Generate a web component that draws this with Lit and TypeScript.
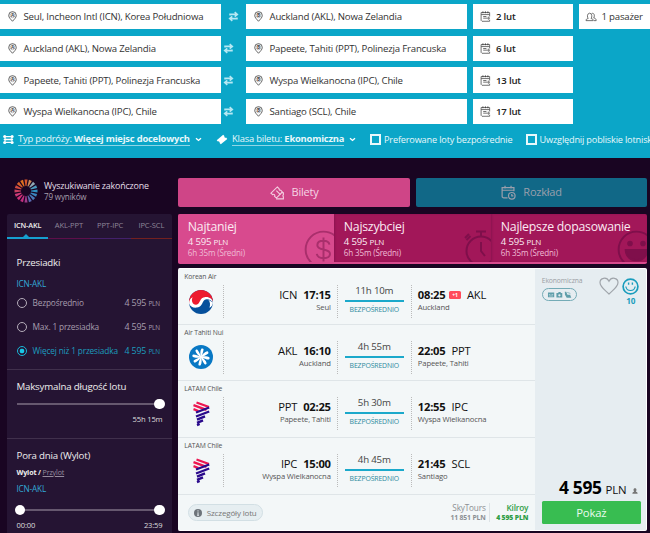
import { LitElement, css, html, svg } from "lit";
import { customElement, property } from "lit/decorators.js";

const pinIcon = (letter: string) => html`
  <svg class="pin" viewBox="0 0 10 12" width="9" height="11">
    <path d="M5 11.3C3.4 9.3.8 7.4.8 4.8a4.2 4.2 0 0 1 8.4 0C9.2 7.4 6.6 9.3 5 11.3z" fill="none" stroke="#444" stroke-width=".9" />
    <circle cx="5" cy="4.8" r="2.6" fill="none" stroke="#888" stroke-width=".6" />
    <text x="5" y="6.7" text-anchor="middle" font-size="5.2" font-weight="700" fill="#444">${letter}</text>
  </svg>
`;

const swapIcon = html`
  <svg viewBox="0 0 12 12" width="11" height="11" fill="none" stroke="#b5e8f3" stroke-width="1.7">
    <path d="M2.2 5V3.7h7.3M7.3 1.2l2.9 2.5-2.9 2.5M9.8 7v1.3H2.5M4.7 5.8L1.8 8.3l2.9 2.5" />
  </svg>
`;

const calendarIcon = html`
  <svg viewBox="0 0 12 12" width="11" height="11" fill="none" stroke="#555" stroke-width=".9">
    <path d="M10.5 6V1.7H1.2v8.5l1 1h8.3V9.5" />
    <path d="M1.2 3.9h9.3" />
    <path d="M3.2.4v2M5.9.4v2M8.6.4v2" stroke="#333" />
    <path d="M3.5 6h3.5M3.5 7.8h6.8M8.6 6.1l1.8 1.7-1.8 1.7" />
  </svg>
`;

const peopleIcon = html`
  <svg viewBox="0 0 13 11" width="12" height="10" fill="none" stroke="#555" stroke-width=".9">
    <path d="M1 9.5c0-1.5.8-2 2.4-2.3C2 5.5 2.3 1.3 5 1.3s3 4.2 1.6 5.9C8.2 7.5 9 8 9 9.5z" />
    <path d="M7.2 1.7C9.8.5 11 3.8 9.5 6.6c1.7.3 2.7.9 2.7 2.9H9.8" />
  </svg>
`;

const chevron = html`
  <svg viewBox="0 0 8 6" width="7" height="5" fill="none" stroke="#fff" stroke-width="1.7">
    <path d="M1 1.5l3 2.6 3-2.6" />
  </svg>
`;

const routeIcon = html`
  <svg viewBox="0 0 12 10" width="11" height="9" fill="none" stroke="#fff" stroke-width="1.4">
    <path d="M2 1.7h8M2 5h8M2 8.3h8" />
    <g fill="#fff" stroke="none">
      <circle cx="1.8" cy="1.7" r="1.7" /><circle cx="2.2" cy="5" r="1.5" /><circle cx="1.8" cy="8.3" r="1.7" />
      <circle cx="10" cy="1.7" r="1.7" /><circle cx="9.6" cy="5" r="1.5" /><circle cx="10" cy="8.3" r="1.7" />
    </g>
  </svg>
`;

const ticketIcon = html`
  <svg viewBox="0 0 12 11" width="12" height="11" fill="#fff">
    <path d="M7.2.8l1.2 1.3a1.2 1.2 0 0 0 1.7 1.5l1.2 1.3-6.5 5.4-1.2-1.3A1.2 1.2 0 0 0 1.9 7.5L.7 6.2z" />
  </svg>
`;

const ticketsIcon = html`
  <svg viewBox="0 0 16 15" width="15" height="14" fill="none" stroke="#f4cfe1" stroke-width="1.2">
    <path d="M7.8 1l2 2a1.2 1.2 0 0 0 1.6 1.5l1.8 1.9-6.4 6.5-2-2A1.2 1.2 0 0 0 3 9.3L1 7.7z" />
    <path d="M6.5 13.8h7.8v-2.3a1.2 1.2 0 0 1 0-2V7.2l-1.8-.1M6.8 5l4.3 4.3" />
  </svg>
`;

const scheduleIcon = html`
  <svg viewBox="0 0 16 16" width="15" height="15" fill="none" stroke="#9a9fac" stroke-width="1.3">
    <path d="M7 13.7H3a1.8 1.8 0 0 1-1.8-1.8V2.7h12.6v4M1.2 5.6h12.6M4.3.8v3M10.7.8v3" />
    <circle cx="11.5" cy="11.5" r="3.5" />
    <path d="M11.5 9.6v2h1.7" />
  </svg>
`;

const dollarArt = html`
  <svg viewBox="0 0 36 36" width="39" height="39" fill="none" stroke="#a92f6c" stroke-width="1.8">
    <circle cx="18" cy="18" r="16.5" />
    <path d="M23.5 13.5c-.5-2.5-2.5-3.5-5.5-3.5-3.5 0-5.7 1.5-5.7 4 0 5.5 11.7 2.5 11.7 8 0 2.5-2.3 4-6 4-3.5 0-5.7-1.3-6.2-4M18 7v22" />
  </svg>
`;

const watchArt = html`
  <svg viewBox="0 0 34 40" width="34" height="40" fill="none" stroke="#7f0f4b" stroke-width="2">
    <circle cx="18" cy="21" r="14.5" />
    <path d="M13 1.5h10M18 2v5M18 12v9l4 5M3.5 10l4-4M2 8l4-4" />
  </svg>
`;

const smileArt = html`
  <svg viewBox="0 0 36 36" width="39" height="39" fill="none" stroke="#7f0f4b" stroke-width="1.8">
    <circle cx="18" cy="18" r="16.5" />
    <circle cx="12" cy="12.5" r="1.7" fill="#7f0f4b" /><circle cx="24" cy="12.5" r="1.7" fill="#7f0f4b" />
    <path d="M8 18.5h20c0 5.5-4.5 9.5-10 9.5s-10-4-10-9.5z" fill="#7f0f4b" />
  </svg>
`;

const logos: Record<string, unknown> = {
  korean: html`
    <svg viewBox="0 0 24 24" width="24" height="24">
      <circle cx="12" cy="12" r="12" fill="#06509c" />
      <path d="M0 12A12 12 0 0 1 24 12C22.5 6 13 5.5 12 12S2 18.5 0 12z" fill="#ed1b2f" />
      <path d="M.1 13.5C0 11 1.2 8 3.6 7.3 1.9 10.5 3.5 15 7.2 14.7 11.5 14.3 10 7.5 16.5 7 20.5 6.7 23.5 9 24 12.5 22.5 10.5 20 8.8 17.3 9.3 12.5 10.2 14.5 16.7 8 17.6 4 18.1.9 16.5.1 13.5z" fill="#fff" />
      <path d="M24 12.5c-.2 2.7-1.5 4.5-3.6 5.3 1-2.7.9-5.7-1.1-8z" fill="#fff" />
    </svg>
  `,
  tahiti: html`
    <svg viewBox="0 0 24 24" width="24" height="24">
      <circle cx="12" cy="12" r="12" fill="#0878c4" />
      ${[0, 45, 90, 135, 180, 225, 270, 315].map(
        (angle) => svg`<path d="M11.6 12C10.9 9 10.1 6 11.2 3.7c.9-.7 1.9-.5 2.3.3.2 2.4-.7 5-1.1 8z" fill="#fff" transform="rotate(${angle + 8} 12 12)" />`
      )}
    </svg>
  `,
  latam: html`
    <svg viewBox="0 0 24 28" width="24" height="28">
      <g fill="none" stroke="#ed1651" stroke-width="2.3">
        <path d="M7.5 2.5l12.5 4.5M4.5 5.2l13 4.6M4.5 9.2l5 1.8" />
      </g>
      <g fill="none" stroke="#2a0a8c" stroke-width="2.4">
        <path d="M20.2 7.5L7 12.5M20.2 11.5L7 16.5M16 16.4l-8 3.2M14 20.4l-6 2.5M10.7 24l-2.7 1.1" />
      </g>
    </svg>
  `
};

@customElement("flight-leg")
export class FlightLeg extends LitElement {
  @property({ type: Object }) leg: any = {};

  render() {
    const leg = this.leg;
    return html`
      <div class="airline">${leg.airline}</div>
      <div class="leg">
        <div class="logo">${logos[leg.logo]}</div>
        <div class="side from">
          <div class="time"><span>${leg.from}</span><b>${leg.departure}</b></div>
          <div class="city">${leg.fromCity}</div>
        </div>
        <div class="duration">
          <div class="hours">${leg.duration}</div>
          <div class="line"></div>
          <div class="direct">BEZPOŚREDNIO</div>
        </div>
        <div class="side">
          <div class="time">
            <b>${leg.arrival}</b>${leg.plus ? html`<i>${leg.plus}</i>` : ""}<span>${leg.to}</span>
          </div>
          <div class="city">${leg.toCity}</div>
        </div>
      </div>
    `;
  }

  static styles = css`
    :host {
      display: block;
      box-sizing: border-box;
      height: 56.9px;
      padding-top: 2px;
      border-bottom: 1px solid #dfe5e8;
    }
    * {
      letter-spacing: -0.02em;
    }
    .airline {
      height: 12px;
      padding-left: 6px;
      font-size: 6.8px;
      line-height: 12px;
      color: #555;
    }
    .leg {
      display: grid;
      grid-template-columns: 45.5px 114px 74px 120px;
      height: 32px;
      margin-top: 2px;
    }
    .logo {
      display: flex;
      align-items: center;
      justify-content: center;
      border-right: 1px dotted #bbb;
    }
    .side {
      padding: 3px 6px 0;
    }
    .from {
      text-align: right;
      border-right: 1px dotted #bbb;
    }
    .from .time {
      justify-content: flex-end;
    }
    .time {
      display: flex;
      align-items: center;
      gap: 6px;
      height: 13px;
      font-size: 11.2px;
      line-height: 13px;
      color: #111;
    }
    .time i {
      width: 12px;
      height: 8px;
      margin-left: -2.5px;
      border-radius: 1.5px;
      background: #ff4b5c;
      color: #fff;
      font: 700 5px/8px "Open Sans", sans-serif;
      text-align: center;
    }
    .city {
      font-size: 7.7px;
      line-height: 12px;
      color: #555;
    }
    .duration {
      padding: 0 7px;
      border-right: 1px dotted #bbb;
      text-align: center;
    }
    .hours {
      height: 15px;
      font-size: 9.7px;
      line-height: 12px;
      color: #444;
    }
    .line {
      height: 2px;
      background: #1ba9cb;
    }
    .direct {
      font-size: 6.9px;
      line-height: 16px;
      color: #2d8a9d;
    }
  `;
}

@customElement("app-root")
export class AppRoot extends LitElement {
  static properties = {
    routes: { type: Array },
    legs: { type: Array }
  };

  declare routes: any[];
  declare legs: any[];

  constructor() {
    super();
    this.routes = [
      { from: "Seul, Incheon Intl (ICN), Korea Południowa", to: "Auckland (AKL), Nowa Zelandia", date: "2 lut" },
      { from: "Auckland (AKL), Nowa Zelandia", to: "Papeete, Tahiti (PPT), Polinezja Francuska", date: "6 lut" },
      { from: "Papeete, Tahiti (PPT), Polinezja Francuska", to: "Wyspa Wielkanocna (IPC), Chile", date: "13 lut" },
      { from: "Wyspa Wielkanocna (IPC), Chile", to: "Santiago (SCL), Chile", date: "17 lut" }
    ];
    this.legs = [
      { airline: "Korean Air", logo: "korean", from: "ICN", departure: "17:15", fromCity: "Seul", duration: "11h 10m", arrival: "08:25", plus: "+1", to: "AKL", toCity: "Auckland" },
      { airline: "Air Tahiti Nui", logo: "tahiti", from: "AKL", departure: "16:10", fromCity: "Auckland", duration: "4h 55m", arrival: "22:05", to: "PPT", toCity: "Papeete, Tahiti" },
      { airline: "LATAM Chile", logo: "latam", from: "PPT", departure: "02:25", fromCity: "Papeete, Tahiti", duration: "5h 30m", arrival: "12:55", to: "IPC", toCity: "Wyspa Wielkanocna" },
      { airline: "LATAM Chile", logo: "latam", from: "IPC", departure: "15:00", fromCity: "Wyspa Wielkanocna", duration: "4h 45m", arrival: "21:45", to: "SCL", toCity: "Santiago" }
    ];
  }

  renderSearch() {
    return html`
      <header class="search">
        ${this.routes.map(
          (route, i) => html`
            <div class="route">
              <div class="field place">${pinIcon("A")}<span>${route.from}</span></div>
              <div class="swap ${i === 0 ? "first" : ""}">${swapIcon}</div>
              <div class="field place to">${pinIcon("B")}<span>${route.to}</span></div>
              <div class="field date">${calendarIcon}<span>${route.date}</span></div>
              ${i === 0 ? html`<div class="field pax">${peopleIcon}<span>1 pasażer</span></div>` : ""}
            </div>
          `
        )}
        <div class="options">
          <div class="option">${routeIcon}<span class="link">Typ podróży: <b>Więcej miejsc docelowych</b></span>${chevron}</div>
          <div class="option">${ticketIcon}<span class="link">Klasa biletu: <b>Ekonomiczna</b></span>${chevron}</div>
          <div class="option"><span class="checkbox"></span><span class="check">Preferowane loty bezpośrednie</span></div>
          <div class="option"><span class="checkbox"></span><span class="check">Uwzględnij pobliskie lotniska</span></div>
        </div>
      </header>
    `;
  }

  renderSidebar() {
    const rays = ["#d8572a", "#c98a5a", "#8fa9b5", "#4a9cc0", "#2f8fc0", "#3a86c0", "#4a78b8", "#5a6ab0", "#a03a8a", "#c02f80", "#d02f78", "#d03a78", "#c83f60", "#d04a40", "#d8602a", "#e0701f"];
    const stops = [
      { label: "Bezpośrednio" },
      { label: "Max. 1 przesiadka" },
      { label: "Więcej niż 1 przesiadka", checked: true }
    ];
    return html`
      <aside>
        <div class="status">
          <svg viewBox="-12 -12 24 24" width="24" height="24">
            ${rays.map((color, i) => svg`<path d="M-.5-5L-1.5-11.5h3L.5-5z" fill=${color} transform="rotate(${i * 22.5})" />`)}
          </svg>
          <div>
            <div class="status-title">Wyszukiwanie zakończone</div>
            <div class="status-count">79 wyników</div>
          </div>
        </div>
        <div class="panel">
          <div class="tabs">
            <div class="tab active">ICN-AKL</div>
            <div class="tab">AKL-PPT</div>
            <div class="tab">PPT-IPC</div>
            <div class="tab">IPC-SCL</div>
          </div>
          <section class="stops">
            <h3>Przesiadki</h3>
            <div class="leg-name">ICN-AKL</div>
            ${stops.map(
              (stop) => html`
                <div class="stop ${stop.checked ? "checked" : ""}">
                  <span class="radio"></span>
                  <span class="stop-label">${stop.label}</span>
                  <span class="stop-price">4 595 <small>PLN</small></span>
                </div>
              `
            )}
          </section>
          <section class="length">
            <h3>Maksymalna długość lotu</h3>
            <div class="slider single"><span class="knob"></span></div>
            <div class="values end"><span>55h 15m</span></div>
          </section>
          <section class="daytime">
            <h3>Pora dnia (Wylot)</h3>
            <div class="mode"><b>Wylot /</b> <u>Przylot</u></div>
            <div class="leg-name">ICN-AKL</div>
            <div class="slider"><span class="knob"></span><span class="knob"></span></div>
            <div class="values"><span>00:00</span><span>23:59</span></div>
          </section>
        </div>
      </aside>
    `;
  }

  renderOffer() {
    return html`
      <div class="offer">
        <div class="offer-top">
          <div>
            <div class="class-name">Ekonomiczna</div>
            <div class="amenities">
              <svg viewBox="0 0 26 8" width="25" height="7.7" fill="#5f9eaa">
                <path d="M1 1.5h6.5v5H1z" /><path d="M2 3.7h1.5M4.7 3.7h1.7M2.2 5.2h4" stroke="#e6edf1" stroke-width=".6" />
                <path d="M9.8 2.2h1.7L12.2 1h1.7l.7 1.2h1.3v4.5H9.8z" /><circle cx="12.9" cy="4.5" r="1.2" fill="#e6edf1" />
                <path d="M18.5.8h1.5l1.3 3h3v1l1 2.2h-4.8L18.7 4z" /><path d="M21 1.5l3.3 1" stroke="#6ba5b0" stroke-width=".7" />
              </svg>
            </div>
          </div>
          <svg class="heart" viewBox="0 0 20 18" width="20" height="18" fill="none" stroke="#a0a5ab" stroke-width="1.2">
            <path d="M10 17C6.5 13.3 1 10.2 1 5.5 1 1 7.5-.8 10 4.2 12.5-.8 19 1 19 5.5 19 10.2 13.5 13.3 10 17z" />
          </svg>
          <div class="score">
            <svg viewBox="0 0 17 17" width="17" height="17" fill="none" stroke="#1b9dbd">
              <circle cx="8.5" cy="8.5" r="7.4" stroke-width="1.7" />
              <path d="M4 8.8c.6 5 8.4 5 9 0M3.3 9h1.2M12.5 9h1.2" stroke-width="1.1" />
              <path d="M6.6 4.5v2.2M10.4 4.5v2.2" stroke-width="1.4" />
            </svg>
            10
          </div>
        </div>
        <div>
          <div class="price">
            <b>4 595</b><span>PLN</span>
            <svg viewBox="0 0 7 7" width="6" height="6" fill="#777"><path d="M3.5.2c2.4 0 1.9 3 .9 3.9.2.6 2.2.3 2.2 2.5H.4c0-2.2 2-1.9 2.2-2.5C1.6 3.2 1.1.2 3.5.2z" /></svg>
          </div>
          <button>Pokaż</button>
        </div>
      </div>
    `;
  }

  render() {
    return html`
      ${this.renderSearch()}
      <div class="page">
        ${this.renderSidebar()}
        <main>
          <div class="views">
            <div class="view">${ticketsIcon}<span>Bilety</span></div>
            <div class="view schedule">${scheduleIcon}<span>Rozkład</span></div>
          </div>
          <div class="sorts">
            ${[
              { title: "Najtaniej", art: dollarArt, cls: "cheap" },
              { title: "Najszybciej", art: watchArt, cls: "fast" },
              { title: "Najlepsze dopasowanie", art: smileArt, cls: "best" }
            ].map(
              (sort) => html`
                <div class="sort ${sort.cls}">
                  <div class="art">${sort.art}</div>
                  <div class="sort-title">${sort.title}</div>
                  <div class="sort-price">4 595 <small>PLN</small></div>
                  <div class="sort-time">6h 35m (Średni)</div>
                </div>
              `
            )}
          </div>
          <div class="result">
            <div class="flights">
              ${this.legs.map((leg) => html`<flight-leg .leg=${leg}></flight-leg>`)}
              <div class="flights-footer">
                <div class="details">
                  <svg viewBox="0 0 8 8" width="8" height="8"><circle cx="4" cy="4" r="4" fill="#6d747a" /><path d="M4 1.3v1.2M4 3.3v3M3.2 6.3h1.7" stroke="#e6edf1" /></svg>
                  Szczegóły lotu
                </div>
                <div class="seller">SkyTours<b>11 851 PLN</b></div>
                <div class="seller best-seller">Kilroy<b>4 595 PLN</b></div>
              </div>
            </div>
            ${this.renderOffer()}
          </div>
        </main>
      </div>
    `;
  }

  static styles = css`
    :host {
      display: flex;
      flex-direction: column;
      width: 650px;
      height: 533px;
      overflow: hidden;
      background: #190522;
      font-family: "Open Sans", "Noto Sans", sans-serif;
    }
    * {
      letter-spacing: -0.02em;
    }
    svg {
      display: block;
      flex: none;
    }
    span,
    .tab,
    .sort-title {
      white-space: nowrap;
    }
    .search {
      flex: none;
      box-sizing: border-box;
      height: 157.5px;
      padding-top: 4px;
      background: #0ba6c8;
      overflow: hidden;
    }
    .route {
      display: grid;
      grid-template-columns: 221px 25px 221px 99.5px 71px;
      height: 25.3px;
      margin-bottom: 6.4px;
    }
    .field {
      display: flex;
      align-items: center;
      background: #fff;
      color: #333;
      font-size: 9.65px;
    }
    .place {
      padding-left: 7.5px;
      gap: 7px;
    }
    .date {
      margin-left: 6px;
      margin-right: -6px;
      padding-left: 7px;
      gap: 5px;
      font-weight: 600;
      color: #222;
    }
    .pax {
      margin-left: 12px;
      margin-right: -12px;
      padding-left: 6px;
      gap: 5px;
    }
    .swap {
      display: flex;
      align-items: center;
      padding-left: 2px;
    }
    .swap.first {
      padding-left: 7px;
    }
    .options {
      display: grid;
      grid-template-columns: 213px 154px 155.5px 124px;
      padding-left: 3px;
      height: 18px;
      color: #e8f8fb;
      font-size: 9.35px;
    }
    .option {
      display: flex;
      align-items: center;
    }
    .link {
      margin: 0 5px 0 4px;
      line-height: 12px;
      border-bottom: 1px solid #8fd6e6;
    }
    .check {
      font-size: 9.2px;
    }
    .checkbox {
      box-sizing: border-box;
      flex: none;
      width: 11px;
      height: 11px;
      margin-right: 3px;
      border: 2px solid #e8f8fb;
    }
    .page {
      display: grid;
      grid-template-columns: 165px 469px;
      column-gap: 6.3px;
      padding-left: 7px;
    }
    .status {
      display: flex;
      align-items: center;
      gap: 6.5px;
      height: 56.5px;
      padding: 10px 0 0 6.5px;
      box-sizing: border-box;
      color: #e4dfe8;
    }
    .status-title {
      font-size: 8.9px;
      line-height: 12px;
    }
    .status-count {
      font-size: 8.1px;
      line-height: 10px;
      color: #a79eae;
    }
    .panel {
      background: #251433;
      height: 330px;
      border-radius: 2px 2px 0 0;
    }
    .tabs {
      display: grid;
      grid-template-columns: repeat(4, 1fr);
      height: 25px;
    }
    .tab {
      box-sizing: border-box;
      border-bottom: 1.5px solid #5e0f4a;
      text-align: center;
      font-size: 7.6px;
      line-height: 22px;
      color: #8f8699;
    }
    .tab:nth-child(3) {
      border-color: #43206b;
    }
    .tab:nth-child(4) {
      border-color: #74201f;
    }
    .tab.active {
      position: relative;
      border-bottom: 2px solid #169fd0;
      color: #eee;
      font-size: 7.3px;
      font-weight: 600;
    }
    .tab.active::after {
      content: "";
      position: absolute;
      left: 16px;
      bottom: 0;
      border: 3.5px solid transparent;
      border-top: 0;
      border-bottom-color: #169fd0;
    }
    section {
      box-sizing: border-box;
      padding: 0 9.5px;
    }
    section + section {
      border-top: 1px solid #40304c;
    }
    h3 {
      margin: 0;
      font-size: 9.7px;
      font-weight: 500;
      line-height: 14px;
      color: #eee;
      white-space: nowrap;
    }
    .stops {
      height: 129.5px;
      padding-top: 17px;
    }
    .leg-name {
      color: #33a9d6;
      font-size: 8.2px;
      line-height: 12px;
    }
    .stops .leg-name {
      margin: 8px 0 1px;
    }
    .stop {
      display: flex;
      align-items: center;
      height: 23.9px;
      padding-right: 2.5px;
      font-size: 8.3px;
      color: #a79eae;
    }
    .radio {
      box-sizing: border-box;
      display: flex;
      width: 10px;
      height: 10px;
      margin-right: 6px;
      border: 1px solid #b5adba;
      border-radius: 50%;
    }
    .stop-label {
      flex: 1;
    }
    .stop-price {
      font-size: 8.9px;
    }
    .stop-price small {
      font-size: 6.4px;
    }
    .checked {
      color: #1c9cbe;
    }
    .checked .radio {
      border-color: #18b8d8;
      background: radial-gradient(circle, #18c8e8 2px, transparent 2.7px);
    }
    .length {
      height: 69px;
      padding-top: 10px;
    }
    .slider {
      display: flex;
      align-items: center;
      justify-content: space-between;
      height: 10px;
      margin: 0 -2px;
      background: linear-gradient(#66586f, #66586f) center / calc(100% - 4px) 2px no-repeat;
    }
    .single {
      justify-content: flex-end;
      margin-top: 5.5px;
    }
    .knob {
      width: 10.5px;
      height: 10.5px;
      border-radius: 50%;
      background: #fff;
    }
    .values {
      display: flex;
      justify-content: space-between;
      margin-top: 5px;
      color: #ddd;
      font-size: 7.6px;
      line-height: 11px;
    }
    .end {
      justify-content: flex-end;
    }
    .daytime {
      padding-top: 10px;
    }
    .mode {
      margin: 4px 0 5px;
      font-size: 7.1px;
      line-height: 11px;
      color: #eee;
    }
    .mode u {
      color: #968c9e;
    }
    .daytime .slider {
      margin-top: 10.5px;
    }
    .views {
      display: grid;
      grid-template-columns: 231.5px 231.5px;
      gap: 6px;
      padding-top: 20.5px;
    }
    .view {
      display: flex;
      align-items: center;
      justify-content: center;
      gap: 7px;
      height: 29px;
      border-radius: 2px;
      background: #cf4587;
      color: #f6d5e5;
      font-size: 11px;
    }
    .schedule {
      background: #116887;
      color: #9a9fac;
    }
    .view span {
      padding-bottom: 1.5px;
    }
    .sorts {
      display: grid;
      grid-template-columns: 156px 157px 156px;
      height: 50px;
      box-sizing: border-box;
      margin-top: 7px;
      border-bottom: 2px solid #d84a8e;
      border-radius: 2px;
      background: #a21759;
      overflow: hidden;
    }
    .sort {
      position: relative;
      padding: 5px 0 0 9.5px;
      overflow: hidden;
      color: #fbeaf2;
      box-shadow: inset 1px 0 2px #8b1350;
    }
    .cheap {
      background: #d84a8e;
      box-shadow: none;
    }
    .art {
      position: absolute;
      right: -9px;
      top: 16px;
    }
    .fast .art {
      right: -6px;
    }
    .sort-title {
      position: relative;
      font-size: 12.3px;
      line-height: 16.5px;
    }
    .sort-price {
      position: relative;
      font-size: 9.6px;
      line-height: 11.5px;
    }
    .sort-price small {
      font-size: 8px;
    }
    .sort-time {
      position: relative;
      font-size: 8.1px;
      line-height: 11px;
      color: #f0bcd5;
    }
    .result {
      display: grid;
      grid-template-columns: 356.5px 112.5px;
      box-sizing: border-box;
      height: 263px;
      margin-top: 4px;
      border: 1px solid #fff;
      border-left-width: 0;
      border-radius: 2px;
      background: #f3f7f8;
      overflow: hidden;
    }
    .flights flight-leg:first-child {
      height: 55.5px;
    }
    .flights-footer {
      display: flex;
      align-items: center;
      height: 35px;
      padding-left: 9.5px;
    }
    .details {
      display: flex;
      align-items: center;
      gap: 5px;
      box-sizing: border-box;
      width: 75px;
      height: 17px;
      padding-left: 5px;
      margin-right: auto;
      border: 1px solid #d2dfe4;
      border-radius: 9px;
      background: #e6eef1;
      color: #777;
      font-size: 8px;
      white-space: nowrap;
    }
    .seller {
      padding: 0 3.5px;
      border-right: 1px solid #dde3e6;
      text-align: right;
      font-size: 8.2px;
      line-height: 10px;
      color: #8b8f93;
    }
    .seller b {
      display: block;
      font-size: 6.8px;
      line-height: 9px;
    }
    .best-seller {
      padding: 0 6.5px 0 6px;
      border: 0;
      font-weight: 600;
      color: #2e9e46;
    }
    .offer {
      display: flex;
      flex-direction: column;
      justify-content: space-between;
      padding: 7px 6px 6.5px 7px;
      background: #e6edf1;
    }
    .offer-top {
      display: grid;
      grid-template-columns: 57px 21.5px 21px;
    }
    .class-name {
      font-size: 6.8px;
      line-height: 9px;
      color: #9b9fa4;
    }
    .amenities {
      display: flex;
      align-items: center;
      justify-content: center;
      box-sizing: border-box;
      width: 35px;
      height: 13px;
      margin-top: 3px;
      border: 1px solid #74abb6;
      border-radius: 7px;
    }
    .heart {
      margin-top: 1px;
    }
    .score {
      display: flex;
      flex-direction: column;
      align-items: center;
      padding-top: 1.5px;
      color: #1b9dbd;
      font-size: 8.2px;
      font-weight: 700;
      line-height: 12px;
    }
    .price {
      display: flex;
      align-items: baseline;
      justify-content: flex-end;
      gap: 4px;
      padding-right: 3px;
      font-size: 11.4px;
      line-height: 22px;
      color: #111;
    }
    .price svg {
      margin-left: 2px;
    }
    .price b {
      font-size: 17.4px;
      color: #000;
    }
    button {
      display: block;
      width: 99px;
      height: 22.5px;
      border: 0;
      border-radius: 1.5px;
      background: #38bd51;
      color: #e9fbee;
      font: 11.3px/21px "Open Sans", sans-serif;
    }
  `;
}
